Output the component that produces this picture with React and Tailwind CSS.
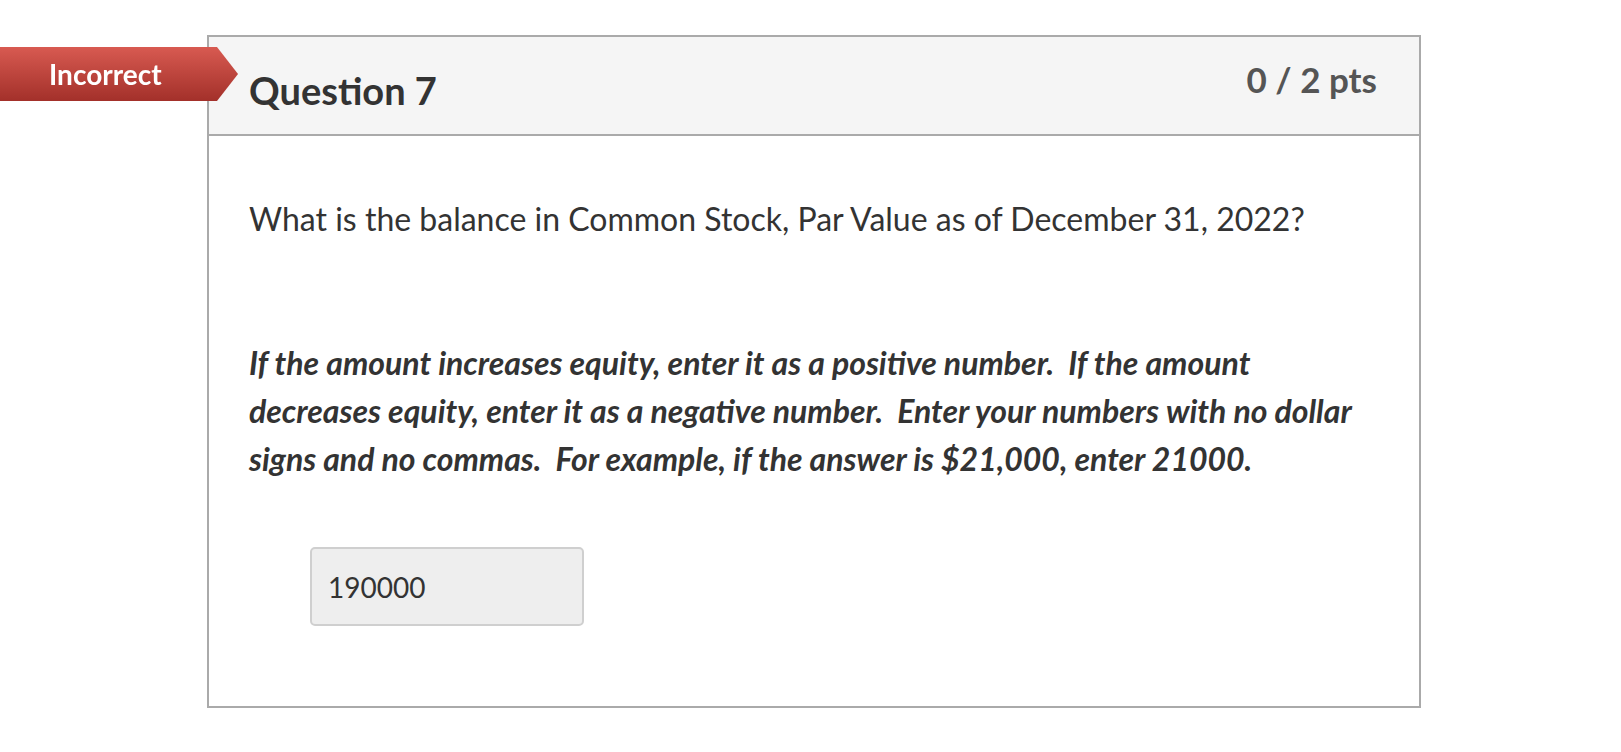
import React from "react";

const Badge = () => (
  <div
    className="absolute left-0 top-[47px] h-[54px] w-[238px] flex items-center pl-[49px] bg-linear-to-b from-[#d85a51] to-[#a3302a] text-white font-bold text-[28px] leading-none [filter:drop-shadow(0_1px_1px_rgba(0,0,0,0.25))]"
    style={{ clipPath: "polygon(0 0, 217px 0, 238px 27px, 217px 54px, 0 54px)" }}
  >
    Incorrect
  </div>
);

export default function App() {
  return (
    <div className="relative min-h-screen bg-white font-['Lato','Noto_Sans',sans-serif] text-[#333]">
      <div className="pt-[35px] pl-[207px]">
        <div className="w-[1214px] border-2 border-[#aaaaaa]">
          {/* Header */}
          <div className="h-[99px] border-b-2 border-[#aaaaaa] bg-[#f5f5f5] flex justify-between items-start px-[40px]">
            <h2 className="mt-[34px] text-[38px] leading-none font-bold text-[#333]">
              Question 7
            </h2>
            <div className="mt-[25px] mr-[2px] text-[35px] leading-none font-bold text-[#555]">
              0 / 2 pts
            </div>
          </div>

          {/* Body */}
          <div className="pl-[40px] pr-[40px] pt-[60px] pb-[80px]">
            <p className="text-[32px] leading-[45px]">
              What is the balance in Common Stock, Par Value as of December 31, 2022?
            </p>
            <p className="mt-[98px] text-[32px] leading-[48px] font-bold italic">
              If the amount increases equity, enter it as a positive number.&nbsp; If the amount
              decreases equity, enter it as a negative number.&nbsp; Enter your numbers with no dollar
              signs and no commas.&nbsp; For example, if the answer is $21,000, enter 21000.
            </p>
            <div className="mt-[64px] ml-[61px] w-[274px] h-[79px] rounded-[5px] border-2 border-[#cfcfcf] bg-[#eeeeee] flex items-center pl-[16px] text-[28px] text-[#333]">
              190000
            </div>
          </div>
        </div>
      </div>
      <Badge />
    </div>
  );
}
